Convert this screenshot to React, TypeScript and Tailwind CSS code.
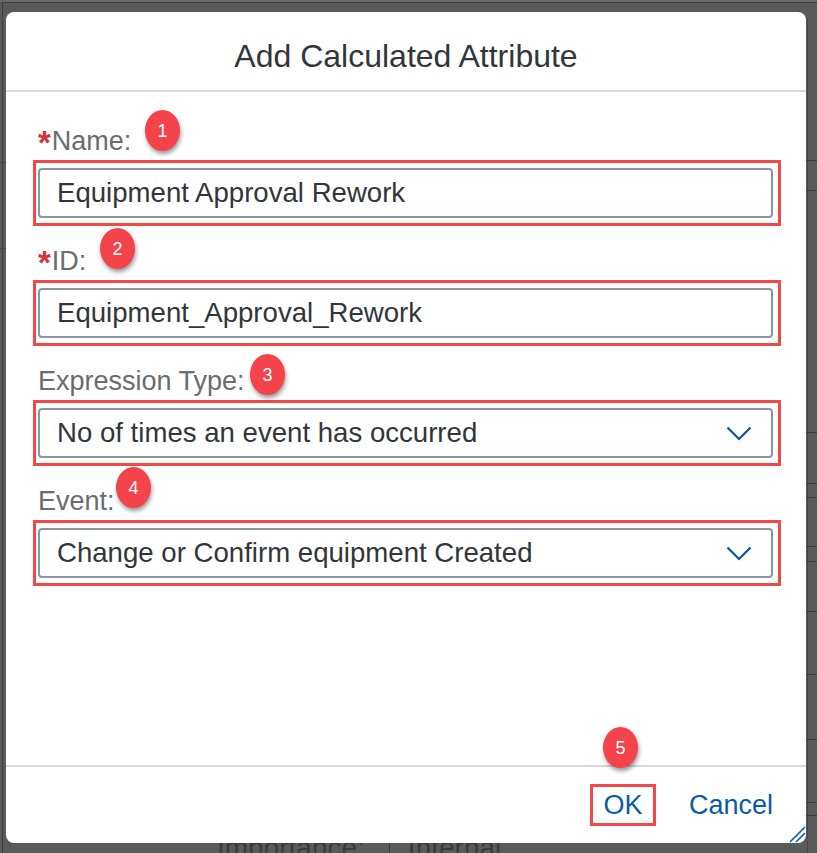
import React from "react";

const FONT = { fontFamily: '"Liberation Sans", Arial, sans-serif' };

function Badge({ n, left, top }: { n: number; left: number; top: number }) {
  return (
    <div
      className="absolute w-[35px] h-[41px] rounded-[50%] bg-[#f4434b] text-white text-[18px] leading-none flex items-center justify-center shadow-[1px_3px_4px_rgba(0,0,0,0.4)]"
      style={{ left, top }}
    >
      {n}
    </div>
  );
}

function Chevron() {
  return (
    <svg width="26" height="15" viewBox="0 0 26 15" className="shrink-0">
      <path d="M1.5 1.5 L13 13 L24.5 1.5" fill="none" stroke="#0854a0" strokeWidth="2.2" />
    </svg>
  );
}

function Field({
  label,
  required,
  value,
  select,
  badge,
}: {
  label: string;
  required?: boolean;
  value: string;
  select?: boolean;
  badge: { n: number; left: number; top: number };
}) {
  return (
    <div className="flex flex-col">
      <div className="relative h-[30px] flex items-center pl-[5px] text-[27px] leading-[30px] text-[#6a6d70]">
        {required && (
          <span className="text-[#d0353d] font-bold text-[33px] leading-[30px] translate-y-[2px] mr-[1px]">*</span>
        )}
        <span>{label}</span>
        <Badge n={badge.n} left={badge.left} top={badge.top} />
      </div>
      <div className="mt-[4px] border-[3px] border-[#f24848] pl-[2px] pr-[5px] py-[5px]">
        <div className="h-[50px] border-2 border-[#8d959c] rounded-[4px] flex items-center pl-[17px] pr-[19px] text-[27.6px] text-[#32363a] bg-white">
          <span className="flex-1 whitespace-nowrap">{value}</span>
          {select && <Chevron />}
        </div>
      </div>
    </div>
  );
}

export default function App() {
  const rightLines = [160, 190, 432, 483, 497, 546, 561, 611, 674, 739, 802, 815];
  return (
    <div className="relative w-[817px] h-[853px] overflow-hidden bg-[#5a5a5a]" style={FONT}>
      {/* background frame behind dialog */}
      <div className="absolute left-0 top-0 w-full h-[2px] bg-[#6a6a6a]" />
      <div className="absolute left-[2px] top-[2px] right-0 h-[1px] bg-[#3e3e3e]" />
      <div className="absolute left-[2px] top-[2px] bottom-0 w-[1px] bg-[#3e3e3e]" />
      <div className="absolute left-0 top-[162px] w-[6px] h-[1px] bg-[#444]" />
      <div className="absolute left-0 top-[248px] w-[6px] h-[1px] bg-[#444]" />
      <div className="absolute left-[807px] top-[18px] bottom-0 w-[1px] bg-[#474747]" />
      {rightLines.map((y) => (
        <div key={y} className="absolute left-[806px] right-0 h-[1px] bg-[#3c3c3c]" style={{ top: y }} />
      ))}
      <div className="absolute left-[217px] top-[833px] flex items-center text-[28px] leading-[30px] text-[#3a3a3a] whitespace-nowrap">
        <span>Importance:</span>
        <span className="ml-[24px] w-[1px] h-[26px] bg-[#3a3a3a]" />
        <span className="ml-[18px]">Internal</span>
      </div>

      <div className="pl-[6px] pt-[12px]">
        <div className="relative z-10 w-[800px] h-[831px] bg-white rounded-[8px] flex flex-col overflow-hidden">
          <div className="h-[80px] shrink-0 border-b-2 border-[#d9d9d9] flex items-center justify-center pt-[10px] text-[32px] text-[#32363a]">
            Add Calculated Attribute
          </div>
          <div className="flex-1 pl-[27px] pr-[25px] pt-[34px] flex flex-col gap-[20px]">
            <Field label="Name:" required value="Equipment Approval Rework" badge={{ n: 1, left: 112, top: -16 }} />
            <Field label="ID:" required value="Equipment_Approval_Rework" badge={{ n: 2, left: 67, top: -18 }} />
            <Field label="Expression Type:" value="No of times an event has occurred" select badge={{ n: 3, left: 217, top: -12 }} />
            <Field label="Event:" value="Change or Confirm equipment Created" select badge={{ n: 4, left: 83, top: -19 }} />
          </div>
          <div className="h-[78px] shrink-0 border-t-2 border-[#d9d9d9] flex items-center justify-end gap-[33px] pr-[33px] text-[27px] text-[#0a5ba6]">
            <div className="relative w-[66px] h-[42px] border-[3px] border-[#f24848] flex items-center justify-center">
              OK
              <Badge n={5} left={10} top={-60} />
            </div>
            <div>Cancel</div>
          </div>
          <svg className="absolute right-0 bottom-0" width="18" height="18" viewBox="0 0 18 18">
            <path d="M2 17 L17 2 M8 17 L17 8" stroke="#0a5ba6" strokeWidth="1.6" fill="none" />
          </svg>
        </div>
      </div>
    </div>
  );
}
